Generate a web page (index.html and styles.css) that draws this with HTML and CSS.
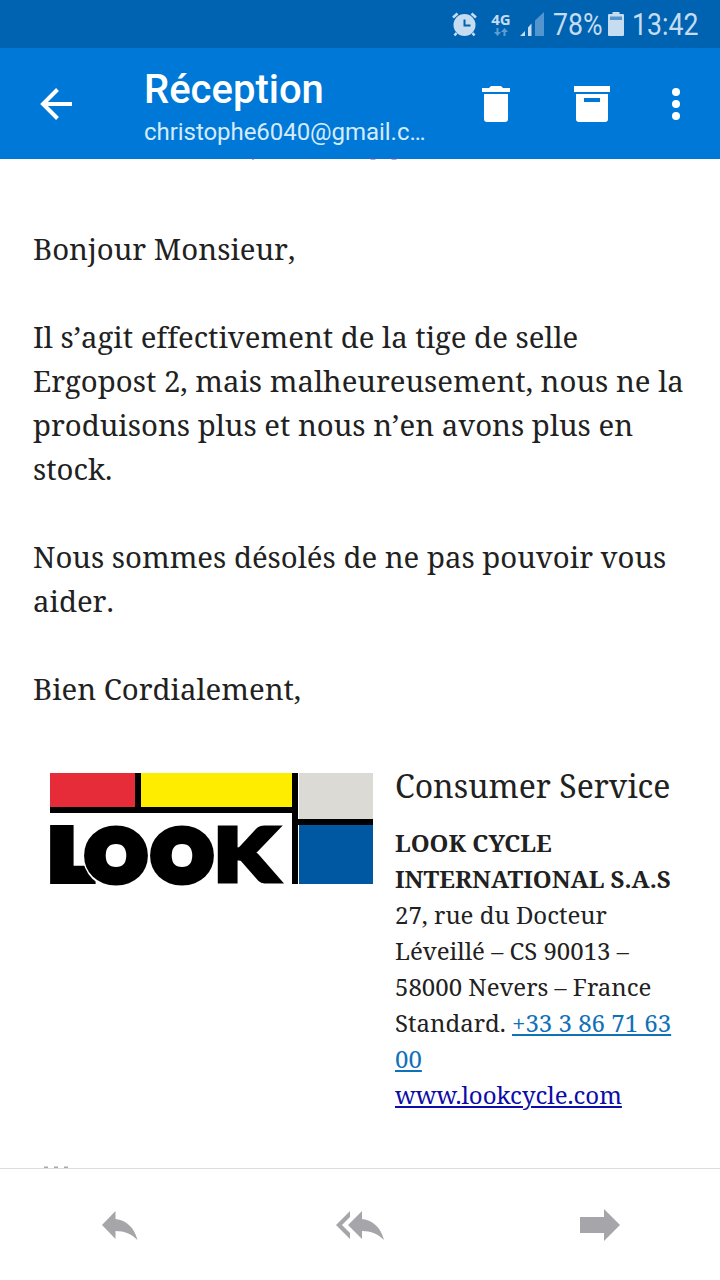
FILE: index.html
```html
<!DOCTYPE html>
<html lang="fr">
<head>
    <meta charset="UTF-8">
    <meta name="viewport" content="width=device-width, initial-scale=1.0">
    <title>Réception</title>
    <link rel="stylesheet" href="styles.css">
</head>
<body>
    <div class="screen">
        <!-- Barre d'état -->
        <div class="status-bar">
            <svg class="alarm" width="26" height="26" viewBox="0 0 26 26">
                <circle cx="13.500" cy="14" r="11" fill="#c5dcf1"/>
                <path d="M2 6.500L6.500 2.500M25 6.500L20.500 2.500M5.500 22L3.500 24.500M21.500 22L23.500 24.500" stroke="#c5dcf1" stroke-width="2.600"/>
                <path d="M13.500 8.500v6h6" fill="none" stroke="#0063b1" stroke-width="2"/>
            </svg>
            <div class="network">
                <span>4G</span>
                <svg width="14" height="8" viewBox="0 0 14 8"><path d="M2.500 0h2v4H7L3.500 8 0 4h2.500zM9.500 8h2V4H14l-3.500-4L7 4h2.500z" fill="#5c9dd3"/></svg>
            </div>
            <svg class="signal" width="26" height="26" viewBox="0 0 26 26">
                <path d="M0 25L5 20v5zM8 25v-8.500l3.500-4V25z" fill="#c5dcf1"/>
                <path d="M15 25V9.500L24 1v24z" fill="#5295cf"/>
            </svg>
            <span class="percent">78%</span>
            <svg class="battery" width="16" height="24" viewBox="0 0 16 24">
                <path d="M4.500 0h7v2H15a1 1 0 0 1 1 1v20a1 1 0 0 1-1 1H1a1 1 0 0 1-1-1V3a1 1 0 0 1 1-1h3.500z" fill="#c5dcf1"/>
                <path d="M2 4.500h12V8H2z" fill="#5295cf"/>
            </svg>
            <span class="clock">13:42</span>
        </div>

        <div class="app-bar">
            <svg class="back" width="32" height="32" viewBox="0 0 32 32"><path d="M32 16H2.500M17.500 1.500L3 16l14.500 14.500" fill="none" stroke="#fff" stroke-width="4"/></svg>
            <div class="heading">
                <h1>Réception</h1>
                <div class="account">christophe6040@gmail.c…</div>
            </div>
            <svg class="trash" width="28" height="36" viewBox="0 0 28 36"><path d="M0 2h7l2-2h10l2 2h7v4H0zM2 8h24v25a3 3 0 0 1-3 3H5a3 3 0 0 1-3-3z" fill="#fff"/></svg>
            <svg class="archive" width="36" height="36" viewBox="0 0 36 36"><path d="M0 0h36v6H0zM2 8h32v25a3 3 0 0 1-3 3H5a3 3 0 0 1-3-3zM10 12v4h16v-4z" fill="#fff" fill-rule="evenodd"/></svg>
            <svg class="more" width="8" height="32" viewBox="0 0 8 32"><g fill="#fff"><circle cx="4" cy="4" r="4"/><circle cx="4" cy="16" r="4"/><circle cx="4" cy="28" r="4"/></g></svg>
            <svg class="edge" width="160" height="2" viewBox="0 0 160 2"><path d="M5 0h3l-1 1.500H5zM121 0h10l-3 1.500h-4zM142 0h10l-3 1.500h-4z" fill="#3f63c5"/></svg>
        </div>

        <div class="message">
            <p>Bonjour Monsieur,</p>
            <p>Il s’agit effectivement de la tige de selle<br>Ergopost 2, mais malheureusement, nous ne la<br>produisons plus et nous n’en avons plus en<br>stock.</p>
            <p>Nous sommes désolés de ne pas pouvoir vous<br>aider.</p>
            <p>Bien Cordialement,</p>

            <div class="signature">
                <svg class="logo" width="323" height="116" viewBox="0 0 323 116">
                    <path d="M0 0h85v36H0z" fill="#e62c39"/>
                    <path d="M91 0h151v36H91z" fill="#ffed00"/>
                    <path d="M249 0h74v46h-74z" fill="#dcdad5"/>
                    <path d="M249 52h74v59h-74z" fill="#0058a2"/>
                    <path d="M85 0h6v34h151V0h6v46h75v6h-75v59h-6V40H0v-6h85z"/>
                    <text class="logo-text" x="0" y="106" textLength="41" lengthAdjust="spacingAndGlyphs">L</text>
                    <circle cx="66" cy="82" r="33.500" fill="#fff"/>
                    <text class="logo-text" x="37" y="106.500" textLength="58" lengthAdjust="spacingAndGlyphs">O</text>
                    <text class="logo-text" x="103" y="106.500" textLength="58" lengthAdjust="spacingAndGlyphs">O</text>
                    <text class="logo-text letter-k" x="164" y="108" textLength="63" lengthAdjust="spacingAndGlyphs">K</text>
                </svg>
                <div class="contact">
                    <div class="service">Consumer Service</div>
                    <div class="details">
                        <b>LOOK CYCLE</b><br>
                        <b>INTERNATIONAL S.A.S</b><br>
                        27, rue du Docteur<br>
                        Léveillé – CS 90013 –<br>
                        58000 Nevers – France<br>
                        Standard. <a class="phone" href="#">+33 3 86 71 63<br>00</a><br>
                        <a class="site" href="#">www.lookcycle.com</a>
                    </div>
                </div>
            </div>
            <svg class="dots" width="28" height="2" viewBox="0 0 28 2"><path d="M1 .5h4V2H1zM11 .5h4V2h-4zM21 .5h4V2h-4z" fill="#aaa"/></svg>
        </div>

        <!-- Répondre, répondre à tous, transférer -->
        <div class="actions">
            <svg class="reply" width="36" height="30" viewBox="0 0 36 30"><path d="M0 14L13.500 0v8c11 1 19 9 22 21-6-6-13-9-22-9v8z" fill="#a6a6aa"/></svg>
            <svg class="reply reply-all" width="48" height="30" viewBox="0 0 48 30"><path d="M0 14L14 0v6L6 14l8 8v6zM12 14L26 0v8c11 1 19 9 22 21-6-6-13-9-22-9v8z" fill="#a6a6aa"/></svg>
            <svg width="40" height="32" viewBox="0 0 40 32"><path d="M0 8h24V0l16 16-16 16v-8H0z" fill="#a6a6aa"/></svg>
        </div>
    </div>
</body>
</html>
```
FILE: styles.css
```css
* {
    margin: 0;
    padding: 0;
    box-sizing: border-box;
}

body {
    background-color: #fff;
    font-family: Roboto, sans-serif;
}

svg {
    display: block;
    flex-shrink: 0;
}

.screen {
    width: 720px;
    height: 1280px;
    display: flex;
    flex-direction: column;
    overflow: hidden;
}

.status-bar {
    height: 48px;
    background-color: #0063b1;
    color: #c5dcf1;
    display: flex;
    align-items: center;
    padding-left: 451px;
    font-size: 31px;
    white-space: nowrap;
}

.network {
    width: 22px;
    margin-left: 13px;
    font: bold 15px/15px "Noto Sans", sans-serif;
    display: flex;
    flex-direction: column;
    align-items: center;
}

.network svg {
    margin-top: 1px;
}

.signal {
    margin-left: 8px;
}

.percent {
    width: 49px;
    margin-left: 7px;
    transform: scaleX(0.86);
    transform-origin: left;
}

.battery {
    margin-left: 6px;
}

.clock {
    margin-left: 8px;
    transform: scaleX(0.86);
    transform-origin: left;
}

.app-bar {
    height: 111px;
    background-color: #0078d7;
    color: #fff;
    display: flex;
    align-items: center;
    padding-left: 40px;
    position: relative;
}

.heading {
    width: 290px;
    margin-left: 72px;
    padding-top: 11px;
    white-space: nowrap;
}

.heading h1 {
    font-size: 40px;
    font-weight: 500;
    line-height: 46px;
}

.account {
    font-size: 24px;
    line-height: 38px;
    letter-spacing: -0.05px;
    color: #d5ebfb;
}

.trash {
    margin-left: 48px;
}

.archive {
    margin-left: 64px;
}

.more {
    margin-left: 62px;
}

.edge {
    position: absolute;
    left: 247px;
    bottom: -1px;
}

.message {
    height: 1009px;
    padding: 68px 0 0 33px;
    font-family: "Noto Serif", "DejaVu Serif Condensed", "DejaVu Serif", serif;
    color: #212121;
    overflow: hidden;
    white-space: nowrap;
    display: flex;
    flex-direction: column;
}

.message p {
    margin-bottom: 44px;
    font-size: 29.33px;
    line-height: 44px;
    font-kerning: none;
    font-variant-ligatures: none;
}

.signature {
    display: flex;
    margin-top: 18px;
    padding-left: 17px;
}

.logo {
    overflow: visible;
}

.logo-text {
    font-family: Lato, sans-serif;
    font-weight: 900;
    font-size: 67px;
    stroke: #000;
    stroke-width: 10px;
}

.letter-k {
    font-size: 73px;
    stroke-width: 5px;
}

.contact {
    margin-left: 22px;
}

.service {
    font-size: 32px;
    line-height: 48px;
    margin-top: -11px;
}

.details {
    font-size: 24px;
    line-height: 36px;
    margin-top: 15px;
}

.phone {
    color: #1070b8;
}

.site {
    color: #0c0ca8;
}

.dots {
    margin: auto 0 0 10px;
}

.actions {
    height: 112px;
    border-top: 1px solid #ddd;
    display: flex;
    align-items: center;
    justify-content: space-between;
    padding: 0 100px 0 102px;
}

.reply {
    margin-top: 2px;
}

.reply-all {
    margin-left: 2px;
}
```
